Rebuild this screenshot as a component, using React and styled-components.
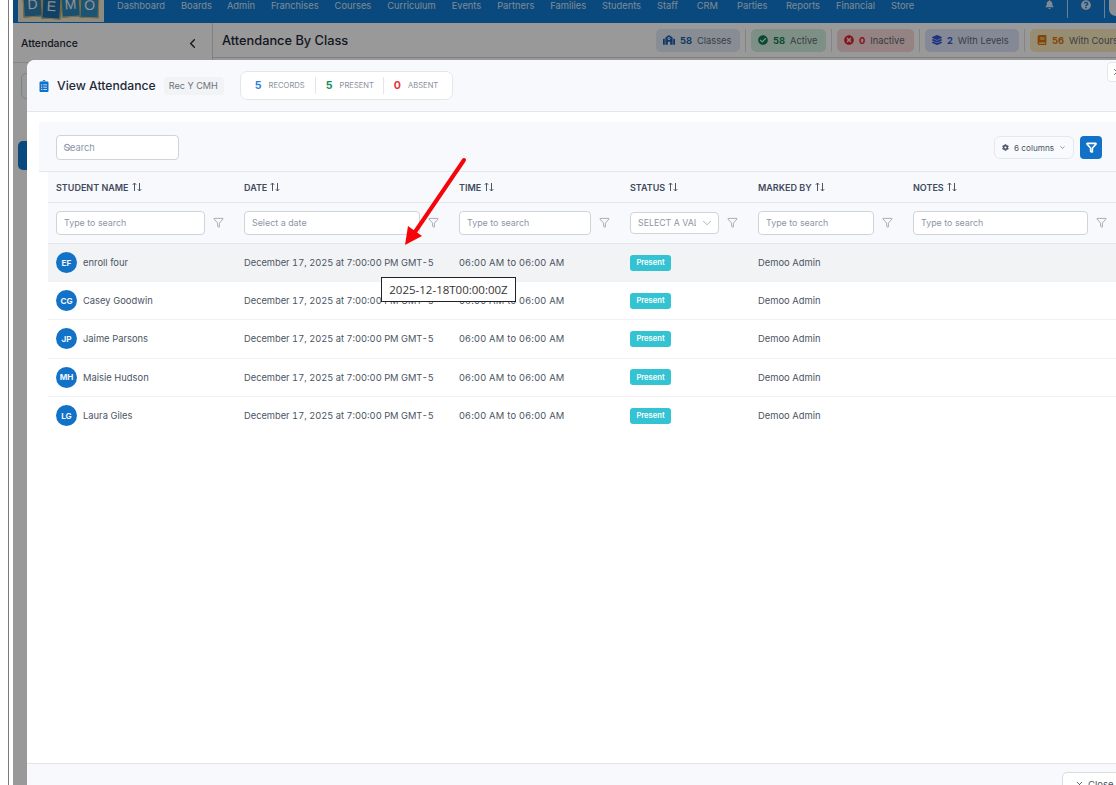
import React from 'react';
import styled, { createGlobalStyle } from 'styled-components';
import { ChevronDown, ChevronLeft, Filter, Search, X } from 'lucide-react';
import {
	FaBell,
	FaBook,
	FaCheckCircle,
	FaClipboardList,
	FaCog,
	FaLayerGroup,
	FaQuestionCircle,
	FaSchool,
	FaTimesCircle,
} from 'react-icons/fa';

const NAV_ITEMS = [
	'Dashboard',
	'Boards',
	'Admin',
	'Franchises',
	'Courses',
	'Curriculum',
	'Events',
	'Partners',
	'Families',
	'Students',
	'Staff',
	'CRM',
	'Parties',
	'Reports',
	'Financial',
	'Store',
];

const CHIPS = [
	{ icon: FaSchool, iconSize: 12, count: '58', label: 'Classes', bg: '#e1ebf5', fg: '#1a5fa8', width: 84 },
	{ icon: FaCheckCircle, iconSize: 10, count: '58', label: 'Active', bg: '#d3f0df', fg: '#0c7a56', width: 75 },
	{ icon: FaTimesCircle, iconSize: 10, count: '0', label: 'Inactive', bg: '#f8d9d9', fg: '#dc2330', width: 77 },
	{ icon: FaLayerGroup, iconSize: 10, count: '2', label: 'With Levels', bg: '#dde5f9', fg: '#3458d0', width: 94 },
	{ icon: FaBook, iconSize: 10, count: '56', label: 'With Courses', bg: '#fbecc0', fg: '#d9730d', width: 100 },
];

const STUDENTS = [
	{ initials: 'EF', name: 'enroll four' },
	{ initials: 'CG', name: 'Casey Goodwin' },
	{ initials: 'JP', name: 'Jaime Parsons' },
	{ initials: 'MH', name: 'Maisie Hudson' },
	{ initials: 'LG', name: 'Laura Giles' },
];

const COLUMNS = ['STUDENT NAME', 'DATE', 'TIME', 'STATUS', 'MARKED BY', 'NOTES'];

const SortIcon = () => (
	<svg width="10" height="10" viewBox="0 0 10 10" fill="none" stroke="#4b5563" strokeWidth="1">
		<path d="M2.5 9V1M.8 2.8 2.5 1l1.7 1.8M7.5 1v8M5.8 7.2 7.5 9l1.7-1.8" />
	</svg>
);

function App() {
	return (
		<Frame>
			<GlobalStyle />
			<LeftEdge />
			<Page>
				<TopNav>
					<Logo>
						{['D', 'E', 'M', 'O'].map((letter) => (
							<LogoTile key={letter}>{letter}</LogoTile>
						))}
					</Logo>
					<NavLinks>
						{NAV_ITEMS.map((item) => (
							<span key={item}>{item}</span>
						))}
					</NavLinks>
					<NavTools>
						<FaBell size={9} />
						<NavDivider />
						<FaQuestionCircle size={10} />
						<NavDivider />
						<NavAvatar />
					</NavTools>
				</TopNav>
				<Workspace>
					<Sidebar>
						<SideHead>
							<span>Attendance</span>
							<ChevronLeft size={15} strokeWidth={2.2} />
						</SideHead>
						<SideSearch />
						<SideActive />
					</Sidebar>
					<MainHead>
						<MainTitle>Attendance By Class</MainTitle>
						<Chips>
							{CHIPS.map((chip, i) => (
								<React.Fragment key={chip.label}>
									{i > 0 && <ChipDivider />}
									<Chip $bg={chip.bg} $fg={chip.fg} $width={chip.width}>
										<chip.icon size={chip.iconSize} />
										<b>{chip.count}</b>
										<span>{chip.label}</span>
									</Chip>
								</React.Fragment>
							))}
						</Chips>
					</MainHead>
				</Workspace>

				<Overlay>
					<Modal>
						<ModalHead>
							<FaClipboardList size={12} color="#1272c8" />
							<ModalTitle>View Attendance</ModalTitle>
							<ClassBadge>Rec Y CMH</ClassBadge>
							<Summary>
								<SummaryItem $color="#2f80d0" $width={61}>
									<b>5</b>
									<span>RECORDS</span>
								</SummaryItem>
								<SummaryItem $color="#178a5e" $width={58}>
									<b>5</b>
									<span>PRESENT</span>
								</SummaryItem>
								<SummaryItem $color="#e5343f" $width={54}>
									<b>0</b>
									<span>ABSENT</span>
								</SummaryItem>
							</Summary>
							<CloseCorner>
								<X size={10} />
							</CloseCorner>
						</ModalHead>

						<ModalBody>
							<Toolbar>
								<SearchWrap>
									<SearchGlyph>
										<Search size={9} strokeWidth={1.6} />
									</SearchGlyph>
									<SearchInput placeholder="Search" />
								</SearchWrap>
								<ToolbarRight>
									<ColumnsButton>
										<FaCog size={9} />
										<span>6 columns</span>
										<ChevronDown size={9} />
									</ColumnsButton>
									<FilterButton>
										<Filter size={11} strokeWidth={3.4} />
									</FilterButton>
								</ToolbarRight>
							</Toolbar>

							<Table>
								<HeadRow>
									{COLUMNS.map((col) => (
										<HeadCell key={col}>
											{col}
											<SortIcon />
										</HeadCell>
									))}
								</HeadRow>
								<FilterRow>
									<FilterCell>
										<FilterInput placeholder="Type to search" />
										<FilterGlyph />
									</FilterCell>
									<FilterCell>
										<FilterInput placeholder="Select a date" />
										<FilterGlyph />
									</FilterCell>
									<FilterCell>
										<FilterInput placeholder="Type to search" />
										<FilterGlyph />
									</FilterCell>
									<FilterCell>
										<StatusSelect>
											<span>SELECT A VALUE</span>
											<ChevronDown size={14} strokeWidth={1.3} />
										</StatusSelect>
										<FilterGlyph />
									</FilterCell>
									<FilterCell>
										<FilterInput placeholder="Type to search" />
										<FilterGlyph />
									</FilterCell>
									<FilterCell>
										<FilterInput placeholder="Type to search" />
										<FilterGlyph />
									</FilterCell>
								</FilterRow>
								{STUDENTS.map((student, i) => (
									<Row key={student.initials} $hover={i === 0}>
										<NameCell>
											<Avatar>{student.initials}</Avatar>
											{student.name}
										</NameCell>
										<DateCell>December 17, 2025 at 7:00:00 PM GMT-5</DateCell>
										<TimeCell>06:00 AM to 06:00 AM</TimeCell>
										<Cell>
											<StatusBadge>Present</StatusBadge>
										</Cell>
										<Cell>Demoo Admin</Cell>
										<Cell />
									</Row>
								))}
							</Table>
						</ModalBody>

						<ModalFoot>
							<CloseButton>
								<X size={9} strokeWidth={2.4} />
								Close
							</CloseButton>
						</ModalFoot>
					</Modal>
				</Overlay>
			</Page>

			<AnnotationArrow width="70" height="95" viewBox="0 0 70 95">
				<path d="M64 5 15 77" stroke="#f5050a" strokeWidth="4" strokeLinecap="round" />
				<path d="M5 90 8 71 22 81Z" fill="#f5050a" />
			</AnnotationArrow>
			<DateTooltip>2025-12-18T00:00:00Z</DateTooltip>
		</Frame>
	);
}

export default App;

const GlobalStyle = createGlobalStyle`
	html,
	body {
		margin: 0;
		padding: 0;
		background: #fff;
	}

	input::placeholder {
		color: #8d96a8;
		opacity: 1;
	}
`;

const Frame = styled.div`
	position: relative;
	display: flex;
	width: 1116px;
	height: 785px;
	overflow: hidden;
	background: #fff;
	font-family: Inter, 'Liberation Sans', sans-serif;
`;

const LeftEdge = styled.div`
	flex: 0 0 13px;
	width: 13px;
	background: linear-gradient(to right, #fff 8px, #7a7a7a 8px, #7a7a7a 9px, #fff 9px);
`;

const Page = styled.div`
	position: relative;
	display: flex;
	flex: 1;
	flex-direction: column;
	min-width: 0;
	overflow: hidden;
	background: #fff;
`;

const TopNav = styled.header`
	display: flex;
	flex: 0 0 23px;
	align-items: flex-start;
	height: 23px;
	padding-left: 5px;
	overflow: hidden;
	background: #127bd0;
	color: rgba(255, 255, 255, 0.82);
`;

const Logo = styled.div`
	display: flex;
	flex: 0 0 86px;
	justify-content: center;
	align-items: flex-end;
	box-sizing: border-box;
	height: 22px;
	padding-bottom: 5px;
	overflow: hidden;
	background: #efe8d2;
`;

const LogoTile = styled.span`
	display: flex;
	flex: 0 0 19px;
	justify-content: center;
	align-items: center;
	box-sizing: border-box;
	height: 26px;
	border: 1px solid #d8b868;
	background: #2e7fb4;
	color: #f0f4f4;
	font-family: 'Liberation Sans', sans-serif;
	font-size: 14px;
	transform: rotate(-3deg);

	&:nth-child(2) {
		background: #1c6ea8;
		transform: translateY(2px) rotate(3deg);
	}

	&:nth-child(3) {
		background: #2a86bb;
		transform: rotate(-4deg);
	}

	&:nth-child(4) {
		background: #2f8cc0;
		transform: translateY(1px) rotate(2deg);
	}
`;

const NavLinks = styled.nav`
	display: flex;
	gap: 16px;
	margin-left: 13px;
	font-size: 9.3px;
	line-height: 11px;
	white-space: nowrap;

	span:nth-child(3) {
		margin-left: -1px;
	}

	span:nth-child(12),
	span:nth-child(13) {
		margin-left: 3px;
	}

	span:nth-child(14) {
		margin-left: 2.5px;
	}
`;

const NavTools = styled.div`
	display: flex;
	gap: 13px;
	align-items: flex-start;
	margin-left: auto;
	margin-right: -7px;
`;

const NavDivider = styled.i`
	display: block;
	width: 1px;
	height: 18px;
	background: rgba(255, 255, 255, 0.7);
`;

const NavAvatar = styled.i`
	display: block;
	width: 14px;
	height: 16px;
	margin-left: -9px;
	border-radius: 0 0 8px 8px;
	background: #e8eef5;
`;

const Workspace = styled.div`
	display: flex;
	flex: 1;
	min-height: 0;
`;

const Sidebar = styled.aside`
	flex: 0 0 199px;
	border-right: 1px solid #d7d7d7;
`;

const SideHead = styled.div`
	display: flex;
	justify-content: space-between;
	align-items: center;
	box-sizing: border-box;
	height: 40px;
	padding: 2px 12px 0 8px;
	border-bottom: 1px solid #e2e2e2;
	font-size: 10.4px;
	font-weight: 500;
	color: #1f2937;
`;

const SideSearch = styled.div`
	height: 24px;
	margin: 10px 8px 0;
	border: 1px solid #d5d8dd;
	border-radius: 5px;
`;

const SideActive = styled.div`
	height: 29px;
	margin: 42px 5px 0;
	border-radius: 5px;
	background: #127bd0;
`;

const MainHead = styled.div`
	display: flex;
	flex: 1;
	align-items: center;
	justify-content: space-between;
	box-sizing: border-box;
	height: 35px;
	padding-left: 9px;
	border-bottom: 1px solid #d0d0d0;
	overflow: hidden;
`;

const MainTitle = styled.h1`
	margin: 0;
	font-size: 12.8px;
	font-weight: 500;
	color: #1f2937;
	white-space: nowrap;
`;

const Chips = styled.div`
	display: flex;
	flex: 0 0 auto;
	align-items: center;
	gap: 5px;
	margin-right: -14px;
`;

const ChipDivider = styled.i`
	display: block;
	width: 1px;
	height: 23px;
	background: #dcdcdc;
`;

const Chip = styled.div`
	display: flex;
	flex: 0 0 ${(p) => p.$width}px;
	align-items: center;
	gap: 5px;
	box-sizing: border-box;
	width: ${(p) => p.$width}px;
	height: 23px;
	padding-left: 7px;
	overflow: hidden;
	border-radius: 5px;
	background: ${(p) => p.$bg};
	color: ${(p) => p.$fg};
	font-size: 9.3px;
	white-space: nowrap;

	b {
		font-weight: 700;
	}

	span {
		color: #5f6875;
	}
`;

const Overlay = styled.div`
	position: absolute;
	inset: 0;
	display: flex;
	align-items: flex-start;
	padding: 60px 0 0 14px;
	background: rgba(0, 0, 0, 0.4);
`;

const Modal = styled.section`
	display: flex;
	flex: 0 0 1109px;
	flex-direction: column;
	height: 760px;
	overflow: hidden;
	border-radius: 8px 8px 0 0;
	background: #fff;
`;

const ModalHead = styled.div`
	display: flex;
	flex: 0 0 52px;
	align-items: center;
	box-sizing: border-box;
	padding: 0 9px 0 11px;
	border-bottom: 1px solid #e4e6ea;
	background: #f8f9fc;
`;

const ModalTitle = styled.h2`
	margin: 0 0 0 7px;
	font-size: 12.2px;
	font-weight: 500;
	color: #1f2937;
	white-space: nowrap;
`;

const ClassBadge = styled.span`
	display: flex;
	align-items: center;
	box-sizing: border-box;
	height: 18px;
	margin-left: 8px;
	padding: 0 6px 0 5px;
	border-radius: 4px;
	background: #f1f3f5;
	color: #6b7280;
	font-size: 9.1px;
	white-space: nowrap;
`;

const Summary = styled.div`
	display: flex;
	flex: 0 0 213px;
	box-sizing: border-box;
	align-items: center;
	height: 29px;
	margin-left: 16px;
	padding-left: 14px;
	border: 1px solid #e4e6ea;
	border-radius: 7px;
	background: #fff;
`;

const SummaryItem = styled.div`
	display: flex;
	flex: 0 0 ${(p) => p.$width}px;
	align-items: center;
	gap: 7px;
	box-sizing: border-box;
	height: 17px;
	margin-right: 10px;
	border-right: 1px solid #e4e6ea;
	white-space: nowrap;

	&:last-child {
		margin-right: 0;
		border-right: 0;
	}

	b {
		color: ${(p) => p.$color};
		font-size: 10.6px;
		font-weight: 700;
	}

	span {
		color: #8a919e;
		font-size: 7.6px;
	}
`;

const CloseCorner = styled.button`
	display: flex;
	flex: 0 0 20px;
	justify-content: center;
	align-items: center;
	height: 20px;
	margin: -27px 0 0 auto;
	padding: 0;
	border: 1px solid #e4e6ea;
	border-radius: 4px;
	background: #fff;
	color: #4b5563;
`;

const ModalBody = styled.div`
	flex: 1;
	min-height: 0;
	padding: 10px 0 0 12px;
	background: #fff;
`;

const Toolbar = styled.div`
	display: flex;
	justify-content: space-between;
	align-items: center;
	box-sizing: border-box;
	height: 50px;
	padding: 2px 34px 0 17px;
	border-bottom: 1px solid #e4e7ec;
	background: #f8f9fc;
`;

const SearchWrap = styled.div`
	position: relative;
	width: 123px;
	height: 25px;
`;

const SearchGlyph = styled.span`
	position: absolute;
	top: 8px;
	left: 7px;
	display: flex;
	color: #8d96a8;
`;

const SearchInput = styled.input`
	box-sizing: border-box;
	width: 100%;
	height: 100%;
	padding: 0 0 0 7px;
	border: 1px solid #ced4da;
	border-radius: 4px;
	background: #fff;
	font: 9.3px Inter, sans-serif;
	outline: none;
`;

const ToolbarRight = styled.div`
	display: flex;
	gap: 6px;
	align-items: center;
`;

const ColumnsButton = styled.button`
	display: flex;
	align-items: center;
	box-sizing: border-box;
	width: 80px;
	height: 23px;
	padding: 0 7px;
	gap: 5px;
	border: 1px solid #e2e8f0;
	border-radius: 6px;
	background: #f8fafd;
	color: #4b5563;
	font: 8.2px Inter, sans-serif;
	white-space: nowrap;

	svg:last-child {
		margin-left: auto;
	}
`;

const FilterButton = styled.button`
	display: flex;
	justify-content: center;
	align-items: center;
	width: 22px;
	height: 23px;
	padding: 0;
	border: 0;
	border-radius: 4px;
	background: #1272c8;
	color: #fff;
`;

const Table = styled.div`
	margin-left: 9px;
`;

const tableColumns = '188px 215px 171px 128px 155px 214px';

const HeadRow = styled.div`
	display: grid;
	grid-template-columns: ${tableColumns};
	align-items: center;
	box-sizing: border-box;
	height: 31px;
	border-bottom: 1px solid #e4e7ec;
	background: #f8f9fc;
`;

const HeadCell = styled.div`
	display: flex;
	gap: 3px;
	align-items: center;
	padding-left: 8px;
	color: #414a5c;
	font-size: 9px;
	font-weight: 600;
	white-space: nowrap;
`;

const FilterRow = styled.div`
	display: grid;
	grid-template-columns: ${tableColumns};
	align-items: center;
	box-sizing: border-box;
	height: 41px;
	padding-bottom: 1px;
	border-bottom: 1px solid #e4e7ec;
	background: #f8f9fc;
`;

const FilterCell = styled.div`
	display: flex;
	gap: 8.5px;
	align-items: center;
	padding: 0 12px 0 8px;
`;

const FilterInput = styled.input`
	flex: 1;
	box-sizing: border-box;
	min-width: 0;
	height: 24px;
	padding: 0 7px;
	border: 1px solid #ced4da;
	border-radius: 4px;
	background: #fff;
	font: 8.9px Inter, sans-serif;
	outline: none;
`;

const FilterGlyph = styled(Filter).attrs({ size: 11, strokeWidth: 1.3 })`
	flex: 0 0 11px;
	color: #6b7a90;
`;

const StatusSelect = styled.div`
	display: flex;
	flex: 1;
	justify-content: space-between;
	align-items: center;
	box-sizing: border-box;
	min-width: 0;
	height: 22px;
	padding: 0 4px 0 7px;
	border: 1px solid #ced4da;
	border-radius: 4px;
	background: #fff;
	color: #8d96a8;
	font-size: 8.8px;
	white-space: nowrap;

	span {
		width: 58px;
		overflow: hidden;
	}
`;

const Row = styled.div`
	display: grid;
	grid-template-columns: ${tableColumns};
	align-items: center;
	box-sizing: border-box;
	height: 38.2px;
	border-bottom: 1px solid #f0f1f3;
	background: ${(p) => (p.$hover ? '#f2f3f5' : '#fff')};

	&:last-child {
		border-bottom: 0;
	}
`;

const Cell = styled.div`
	display: flex;
	align-items: center;
	padding-left: 8px;
	color: #4b5563;
	font-size: 9.4px;
	white-space: nowrap;
`;

const NameCell = styled(Cell)`
	gap: 6px;
`;

const DateCell = styled(Cell)`
	font-size: 9.3px;
	font-variant-numeric: tabular-nums;
`;

const TimeCell = styled(Cell)`
	letter-spacing: 0.2px;
`;

const Avatar = styled.span`
	display: flex;
	justify-content: center;
	align-items: center;
	width: 21px;
	height: 21px;
	border-radius: 50%;
	background: #1272c8;
	color: #f2f6fb;
	font-size: 8.2px;
	font-weight: 700;
`;

const StatusBadge = styled.span`
	display: flex;
	justify-content: center;
	align-items: center;
	width: 41px;
	height: 16px;
	border-radius: 3px;
	background: #33c3d2;
	color: #fff;
	font-size: 7.6px;
	font-weight: 600;
`;

const ModalFoot = styled.div`
	display: flex;
	flex: 0 0 57px;
	justify-content: flex-end;
	box-sizing: border-box;
	padding: 8px 16px 0 0;
	border-top: 1px solid #e4e6ea;
	background: #f8f9fc;
`;

const CloseButton = styled.button`
	display: flex;
	gap: 4px;
	align-items: center;
	align-self: flex-start;
	box-sizing: border-box;
	width: 58px;
	height: 24px;
	padding: 0 0 0 12px;
	border: 1px solid #d9dce1;
	border-radius: 5px;
	background: #fff;
	color: #4b5563;
	font: 9.5px Inter, sans-serif;
`;

const AnnotationArrow = styled.svg`
	position: absolute;
	top: 155px;
	left: 400px;
`;

const DateTooltip = styled.div`
	position: absolute;
	top: 277px;
	left: 381px;
	box-sizing: border-box;
	width: 135px;
	height: 25px;
	border: 1px solid #222;
	background: #fff;
	color: #333;
	font-family: 'Open Sans', sans-serif;
	font-size: 11.5px;
	line-height: 23px;
	text-align: center;
	white-space: nowrap;
`;
